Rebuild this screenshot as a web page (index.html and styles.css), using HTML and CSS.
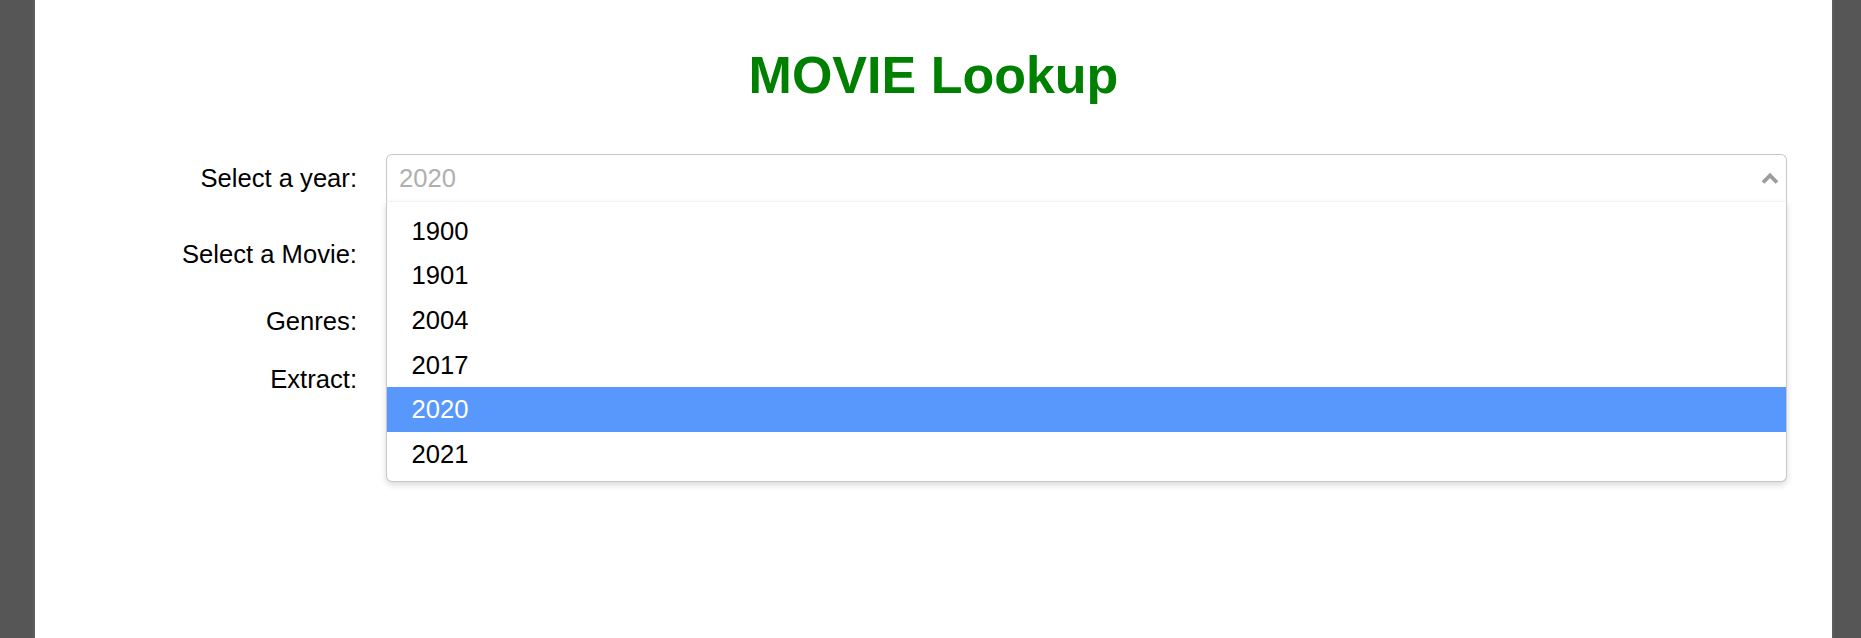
FILE: index.html
```html
<!DOCTYPE html>
<html lang="en">
<head>
<meta charset="utf-8">
<title>MOVIE Lookup</title>
<link rel="stylesheet" href="styles.css">
</head>
<body>
<div class="sheet">
  <h1 class="title">MOVIE Lookup</h1>
  <div class="form">
    <label class="label">Select a year:</label>
    <div class="vs vs-open">
      <div class="vs-toggle">
        <span class="vs-selected">2020</span>
        <svg class="vs-indicator" width="18" height="12" viewBox="0 0 18 12" aria-hidden="true">
          <polyline points="2,10.5 9,3.5 16,10.5" fill="none" stroke="#9c9c9c" stroke-width="3.8"/>
        </svg>
      </div>
      <ul class="vs-menu">
        <li class="vs-option">1900</li>
        <li class="vs-option">1901</li>
        <li class="vs-option">2004</li>
        <li class="vs-option">2017</li>
        <li class="vs-option vs-highlight">2020</li>
        <li class="vs-option">2021</li>
      </ul>
    </div>

    <label class="label">Select a Movie:</label>
    <div class="vs">
      <div class="vs-toggle"></div>
    </div>

    <label class="label">Genres:</label>
    <div class="value"></div>

    <label class="label">Extract:</label>
    <div class="value"></div>
  </div>
</div>
</body>
</html>
```

FILE: styles.css
```css
html, body {
  margin: 0;
  padding: 0;
  height: 100%;
}

body {
  background: #565656;
  font-family: "Liberation Sans", Arial, sans-serif;
  color: #000;
}

.sheet {
  margin: 0 29px 0 35px;
  min-height: 100%;
  background: #fff;
  box-shadow: -2px 0 0 #5e5e5e, 2px 0 0 #5e5e5e;
  padding-top: 45px;
  box-sizing: border-box;
}

.title {
  margin: 0;
  text-align: center;
  color: #008000;
  font-size: 52px;
  font-weight: bold;
  line-height: normal;
}

.form {
  margin-top: 49px;
  display: grid;
  grid-template-columns: 322px 1401px;
  column-gap: 28.5px;
  row-gap: 28.5px;
  align-items: center;
  font-size: 25.6px;
}

.label {
  text-align: right;
  line-height: normal;
}

.vs {
  position: relative;
}

.vs-toggle {
  height: 48px;
  box-sizing: border-box;
  border: 1px solid #c8c8c8;
  border-radius: 6px;
  display: flex;
  align-items: center;
  padding: 0 7px 0 12.5px;
  background: #fff;
}

.vs-open .vs-toggle {
  border-bottom-color: transparent;
  border-bottom-left-radius: 0;
  border-bottom-right-radius: 0;
}

.vs-selected {
  flex: 1;
  color: #b0b0b0;
  line-height: normal;
}

.vs-indicator {
  display: block;
  flex: none;
}

.vs-menu {
  position: absolute;
  z-index: 10;
  top: 100%;
  left: 0;
  right: 0;
  margin: 0;
  padding: 7px 0 4px;
  list-style: none;
  background: #fff;
  border: 1px solid #c8c8c8;
  border-top: 1px solid #f3f3f3;
  border-radius: 0 0 6px 6px;
  box-shadow: 0 3px 6px rgba(0, 0, 0, 0.15);
  box-sizing: border-box;
  margin-top: -1px;
}

.vs-option {
  height: 44.6px;
  display: flex;
  align-items: center;
  padding: 0 25px;
  color: #000;
  line-height: normal;
}

.vs-highlight {
  background: #5897fb;
  color: #fff;
}

.value {
  min-height: 29px;
}
```
